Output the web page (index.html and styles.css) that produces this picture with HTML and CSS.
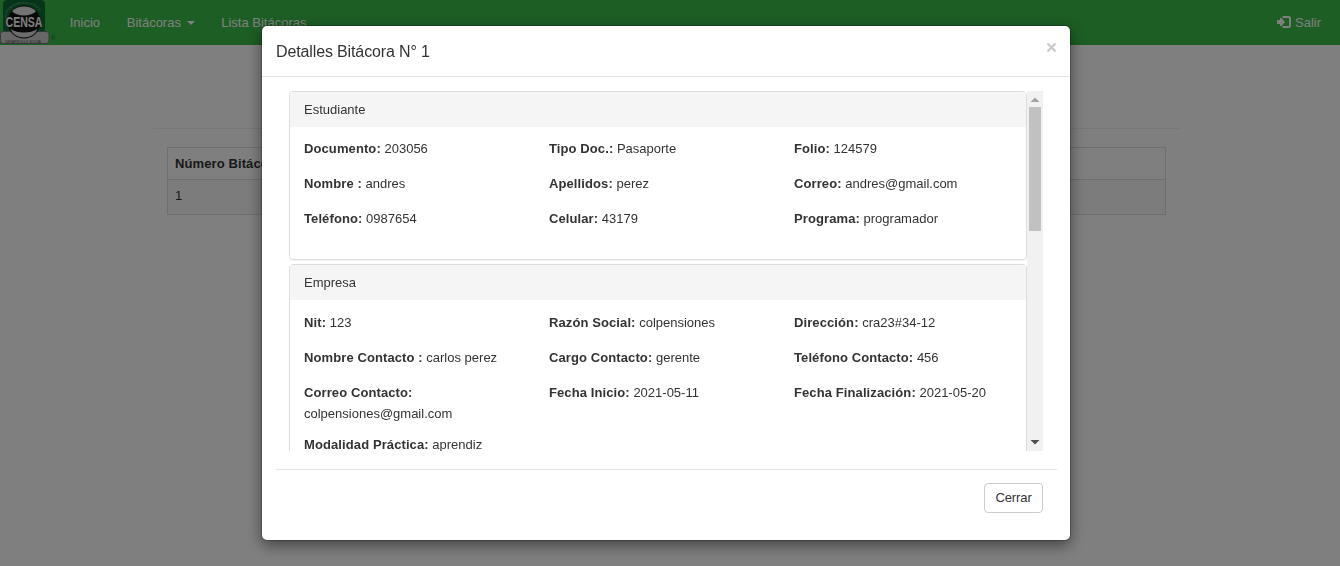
FILE: index.html
```html
<!DOCTYPE html>
<html lang="es">
<head>
<meta charset="utf-8">
<title>Bitácoras</title>
<link rel="stylesheet" href="styles.css">
</head>
<body>
<nav class="navbar">
  <svg class="logo" width="57" height="45" viewBox="0 0 57 45">
    <path d="M3 4Q3 0 8 0H40Q45 0 45 4V28Q45 34 39 34H9Q3 34 3 28Z" fill="#0c6c34"/>
    <path id="ring" d="M6 18A18 14.500 0 0 1 42 18" fill="none"/>
    <text class="logo-ring"><textPath href="#ring">CENTRO DE SISTEMAS DE ANTIOQUIA</textPath></text>
    <rect x=".500" y="31.500" width="48.500" height="12" rx="3" fill="#cfcfcf" stroke="#667" stroke-width=".8"/>
    <circle cx="24" cy="22" r="16.500" fill="#111"/>
    <path d="M12 11.500Q16 6.500 24 6.500T36 11.500Q31 15.500 24 15.500T12 11.500Z" fill="#e8e8e8"/>
    <path d="M10.500 29Q16 32.500 24 32.500T37.500 29Q34 37.500 24 37.500T10.500 29Z" fill="#d8d8d8"/>
    <text class="logo-name" x="5.500" y="27" textLength="37" lengthAdjust="spacingAndGlyphs">CENSA</text>
    <text class="logo-foot" x="5" y="42.500" textLength="37" lengthAdjust="spacingAndGlyphs">DESARROLLO SOCIAL</text>
    <text class="logo-reg" x="51" y="40">®</text>
  </svg>
  <a class="nav-link">Inicio</a>
  <a class="nav-link">Bitácoras <span class="caret"></span></a>
  <a class="nav-link">Lista Bitácoras</a>
  <a class="nav-link logout">
    <svg width="14" height="12" viewBox="0 0 14 12"><path d="M0 4h3V2h1.500L8 6 4.500 10H3V8H0Z" fill="#fff"/><path d="M5.500 1H11.500Q13 1 13 2.500v7Q13 11 11.500 11H5.500" fill="none" stroke="#fff" stroke-width="2"/></svg>
    Salir</a>
</nav>
<main class="content">
  <table class="table">
    <tr><th>Número Bitácora</th></tr>
    <tr><td>1</td></tr>
  </table>
</main>
<div class="backdrop">
  <section class="modal">
    <header class="modal-header"><h4>Detalles Bitácora N° 1</h4>
      <svg class="close" width="9" height="9" viewBox="0 0 9 9"><path d="M.500 .500l8 8M8.500 .500l-8 8" stroke="#c8c8c8" stroke-width="2.200"/></svg>
    </header>
    <div class="scroll-area">
      <div class="panels">
        <section class="panel first">
          <h5>Estudiante</h5>
          <div class="fields">
            <p><b>Documento:</b> 203056</p><p><b>Tipo Doc.:</b> Pasaporte</p><p><b>Folio:</b> 124579</p>
            <p><b>Nombre :</b> andres</p><p><b>Apellidos:</b> perez</p><p><b>Correo:</b> andres@gmail.com</p>
            <p><b>Teléfono:</b> 0987654</p><p><b>Celular:</b> 43179</p><p><b>Programa:</b> programador</p>
          </div>
        </section>
        <section class="panel">
          <h5>Empresa</h5>
          <div class="fields">
            <p><b>Nit:</b> 123</p><p><b>Razón Social:</b> colpensiones</p><p><b>Dirección:</b> cra23#34-12</p>
            <p><b>Nombre Contacto :</b> carlos perez</p><p><b>Cargo Contacto:</b> gerente</p><p><b>Teléfono Contacto:</b> 456</p>
            <p><b>Correo Contacto:</b><br>colpensiones@gmail.com</p><p><b>Fecha Inicio:</b> 2021-05-11</p><p><b>Fecha Finalización:</b> 2021-05-20</p>
            <p><b>Modalidad Práctica:</b> aprendiz</p>
          </div>
        </section>
      </div>
      <div class="scrollbar">
        <svg width="16" height="16" viewBox="0 0 16 16"><path d="M3.500 11L8 6.500 12.500 11Z" fill="#a3a3a3"/></svg>
        <div class="thumb"></div>
        <svg class="down" width="16" height="16" viewBox="0 0 16 16"><path d="M3.500 5L8 9.500 12.500 5Z" fill="#505050"/></svg>
      </div>
    </div>
    <footer class="modal-footer"><button class="btn">Cerrar</button></footer>
  </section>
</div>
</body>
</html>
```
FILE: styles.css
```css
* { box-sizing: border-box; }
body { margin: 0; height: 566px; overflow: hidden; background: #fff; color: #333; font: 13px/21px "Liberation Sans", Arial, sans-serif; }
h4, h5, p { margin: 0; font-weight: 400; }
b, th { letter-spacing: .1px; }
.navbar { display: flex; height: 45px; padding-right: 19px; background: #3abc48; color: #fff; }
.logo { flex: none; font-family: "Liberation Sans", Arial, sans-serif; }
.logo-ring { font-size: 2.3px; fill: #a9cdb6; }
.logo-name { font-size: 14px; font-weight: 700; fill: #fff; stroke: #111; stroke-width: 1px; paint-order: stroke; }
.logo-foot { font-size: 4px; fill: #444; }
.logo-reg { font-size: 6px; fill: #176026; }
.nav-link { padding: 12px 14px 0 12.7px; white-space: nowrap; }
.logout { margin-left: auto; padding-right: 0; }
.logout svg { vertical-align: -1px; }
.caret { display: inline-block; margin: 0 0 2px 2px; vertical-align: middle; border: 4px solid transparent; border-top-color: #fff; border-bottom: 0; }
.content { width: 1026px; margin: 83px 0 0 153px; padding: 18px 14px 0 14px; border-top: 1px solid #eee; }
.table { width: 999px; border: 1px solid #ddd; border-collapse: collapse; }
.table th, .table td { height: 32px; padding: 5px 7px; border: 1px solid #ddd; text-align: left; vertical-align: top; }
.table td { height: 35px; background: #f9f9f9; }
.backdrop { position: fixed; inset: 0; padding: 26px 0 0 262px; background: rgba(0, 0, 0, .5); }
.modal { width: 808px; height: 514px; background: #fff; border-radius: 5px; box-shadow: 0 0 0 1px rgba(0, 0, 0, .2), 0 5px 15px rgba(0, 0, 0, .5); }
.modal-header { display: flex; justify-content: space-between; height: 51px; padding: 15px 14px 0; border-bottom: 1px solid #e5e5e5; }
.modal-header h4 { font-size: 16px; letter-spacing: -.13px; }
.close { margin-top: 2px; }
.scroll-area { display: flex; height: 360px; margin: 14px 27px 0; overflow: hidden; }
.panels { width: 738px; }
.panel { height: 240px; margin-bottom: 4px; border: 1px solid #ddd; border-radius: 4px; box-shadow: 0 1px 1px rgba(0, 0, 0, .05); }
.panel.first { height: 169px; }
.panel h5 { height: 35px; padding: 7px 14px; font-size: 13px; background: #f5f5f5; }
.fields { display: grid; grid-template-columns: repeat(3, 245px); padding: 12px 0 0 14px; }
.panel.first .fields { padding-top: 11px; }
.fields p { min-height: 35px; padding-bottom: 10px; }
.scrollbar { display: flex; flex-direction: column; width: 16px; background: #f1f1f1; }
.thumb { height: 124px; margin: 0 2px; background: #c1c1c1; }
.scrollbar .down { margin-top: auto; }
.modal-footer { display: flex; justify-content: flex-end; margin: 18px 13px 0 14px; padding: 13px 14px 0; border-top: 1px solid #e5e5e5; }
.btn { width: 59px; height: 30px; padding: 0 0 2px; border: 1px solid #ccc; border-radius: 4px; background: #fff; color: #333; font: 13px/21px "Liberation Sans", Arial, sans-serif; letter-spacing: -.1px; }
```
